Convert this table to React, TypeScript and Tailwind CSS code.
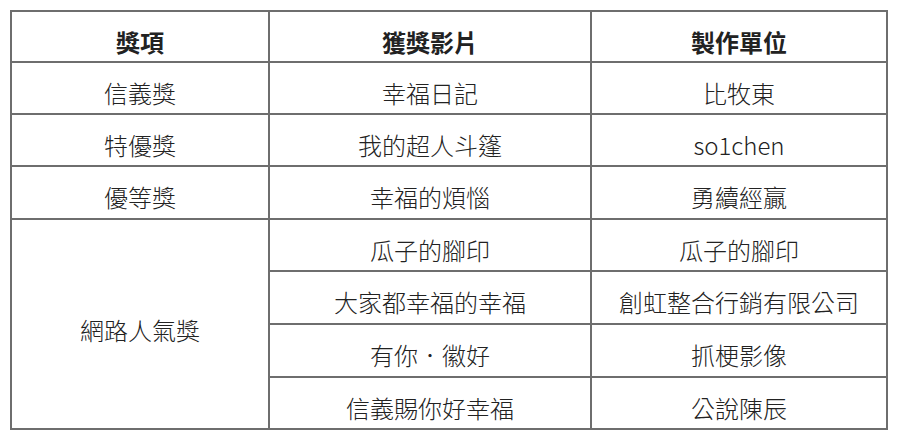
import { Fragment } from 'react';

const rows = [
  { award: '信義獎', film: '幸福日記', maker: '比牧東' },
  { award: '特優獎', film: '我的超人斗篷', maker: 'so1chen' },
  { award: '優等獎', film: '幸福的煩惱', maker: '勇續經贏' },
];

const popular = [
  { film: '瓜子的腳印', maker: '瓜子的腳印' },
  { film: '大家都幸福的幸福', maker: '創虹整合行銷有限公司' },
  { film: '有你．徽好', maker: '抓梗影像' },
  { film: '信義賜你好幸福', maker: '公說陳辰' },
];

const cell = 'border-r-2 border-b-2 border-[#6e6e6e] pt-[12px] text-center';

export default function App() {
  return (
    <div
      className="min-h-[439px] w-[900px] bg-white pl-[10px] pt-[10px] text-[24px] font-light leading-normal text-[#222]"
      style={{ fontFamily: '"Noto Sans CJK TC", "Noto Sans", sans-serif' }}
    >
      <div className="grid w-[878px] grid-cols-[258px_322px_296px] grid-rows-[51px_52px_52px_53px_52px_53px_53px_52px] border-l-2 border-t-2 border-[#6e6e6e]">
        <div className={`${cell} font-bold`}>獎項</div>
        <div className={`${cell} font-bold`}>獲獎影片</div>
        <div className={`${cell} font-bold`}>製作單位</div>
        {rows.map((r) => (
          <Fragment key={r.award}>
            <div className={cell}>{r.award}</div>
            <div className={cell}>{r.film}</div>
            <div className={cell}>{r.maker}</div>
          </Fragment>
        ))}
        <div className="col-start-1 row-span-4 row-start-5 flex items-center justify-center border-r-2 border-b-2 border-[#6e6e6e] pt-[12px]">
          網路人氣獎
        </div>
        {popular.map((p) => (
          <Fragment key={p.film}>
            <div className={`${cell} col-start-2`}>{p.film}</div>
            <div className={`${cell} col-start-3`}>{p.maker}</div>
          </Fragment>
        ))}
      </div>
    </div>
  );
}
